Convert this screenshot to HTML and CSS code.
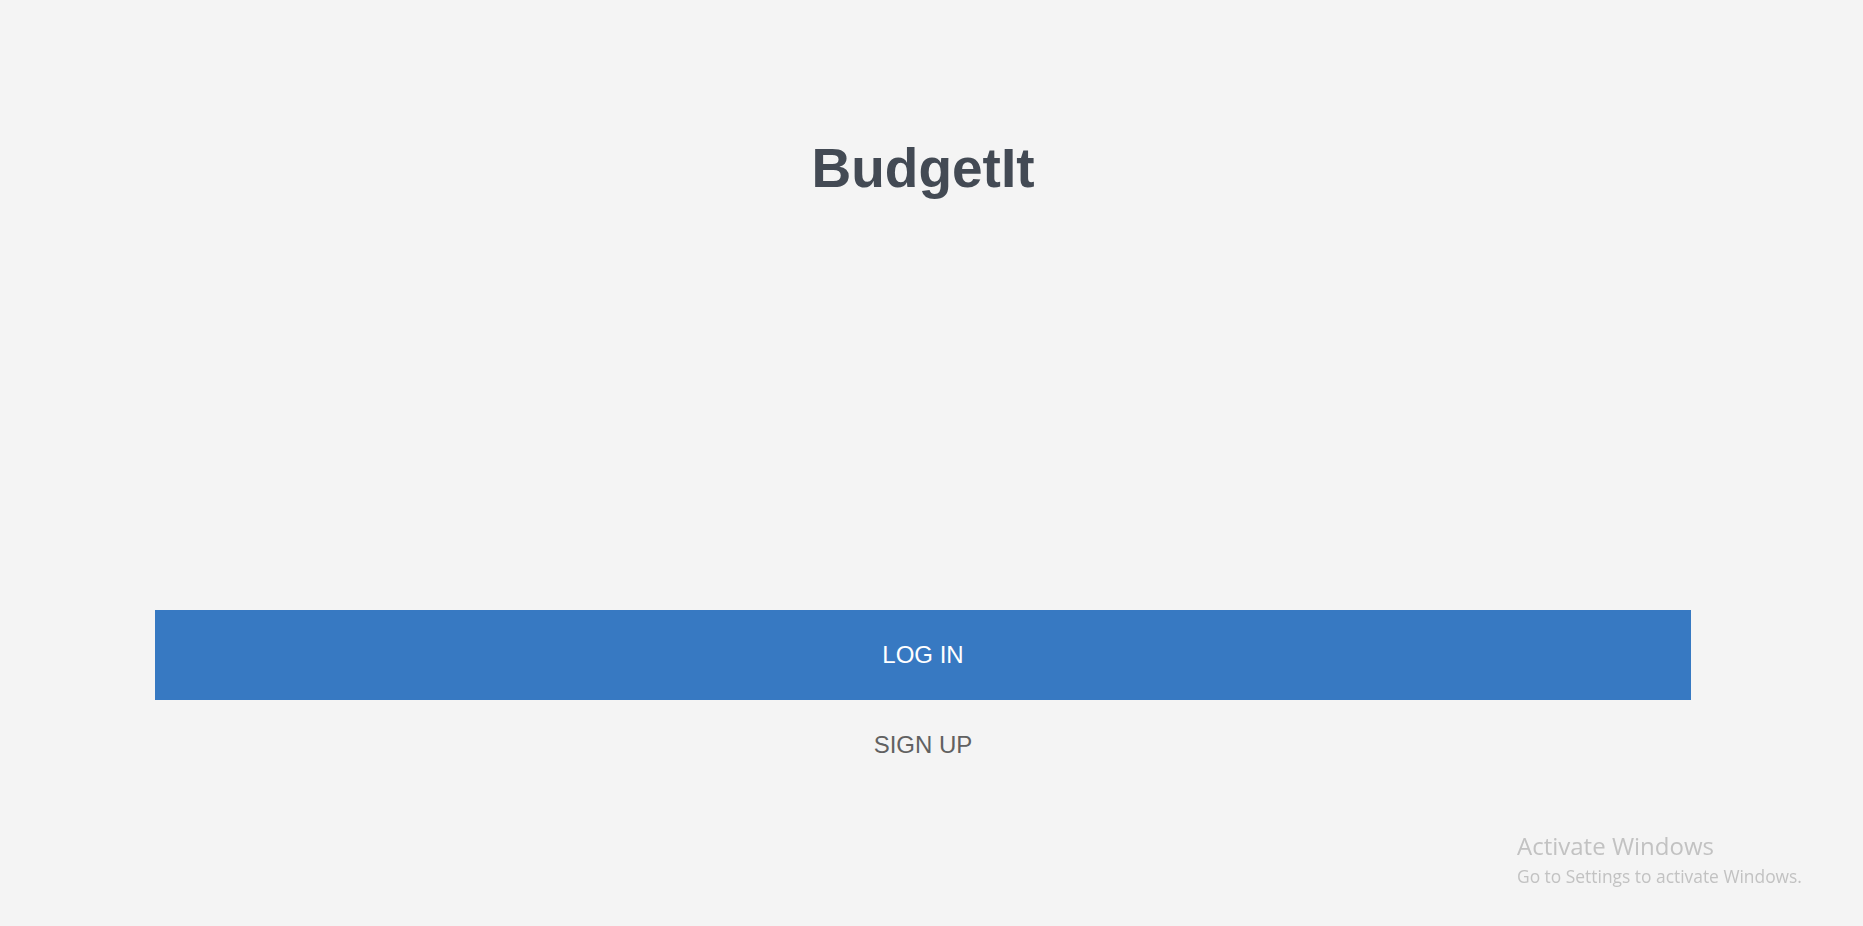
FILE: index.html
```html
<!DOCTYPE html>
<html lang="en">
<head>
<meta charset="utf-8">
<title>BudgetIt</title>
<link rel="stylesheet" href="styles.css">
</head>
<body>
<main class="page">
  <h1 class="brand">BudgetIt</h1>
  <div class="actions">
    <button class="btn-login" type="button">LOG IN</button>
    <button class="btn-signup" type="button">SIGN UP</button>
  </div>
</main>
<div class="activate">
  <div class="activate-title">Activate Windows</div>
  <div class="activate-sub">Go to Settings to activate Windows.</div>
</div>
</body>
</html>
```
FILE: styles.css
```css
html, body {
  margin: 0;
  padding: 0;
  background: #f4f4f4;
  height: 100%;
}
body {
  font-family: "Liberation Sans", Arial, sans-serif;
  overflow: hidden;
}
.page {
  width: 1846px;
  box-sizing: border-box;
  padding: 0 155px;
  display: flex;
  flex-direction: column;
}
.brand {
  margin: 141px 0 0;
  font-size: 55px;
  line-height: 1;
  font-weight: bold;
  color: #434a54;
  text-align: center;
}
.actions {
  margin-top: 414px;
  display: flex;
  flex-direction: column;
}
.btn-login {
  height: 90px;
  border: 0;
  margin: 0;
  padding: 0;
  background: #3779c2;
  color: #ffffff;
  font-family: "Liberation Sans", Arial, sans-serif;
  font-size: 24px;
  line-height: 1;
  display: flex;
  align-items: center;
  justify-content: center;
}
.btn-signup {
  margin: 33px 0 0;
  padding: 0;
  border: 0;
  background: transparent;
  color: #616161;
  font-family: "Liberation Sans", Arial, sans-serif;
  font-size: 24px;
  line-height: 1;
  text-align: center;
}
.activate {
  position: fixed;
  left: 1517px;
  top: 830px;
  font-family: "Open Sans", "Noto Sans", sans-serif;
  color: #c2c2c2;
}
.activate-title {
  font-size: 24px;
  line-height: 32px;
}
.activate-sub {
  font-size: 17.4px;
  line-height: 29px;
}
```
